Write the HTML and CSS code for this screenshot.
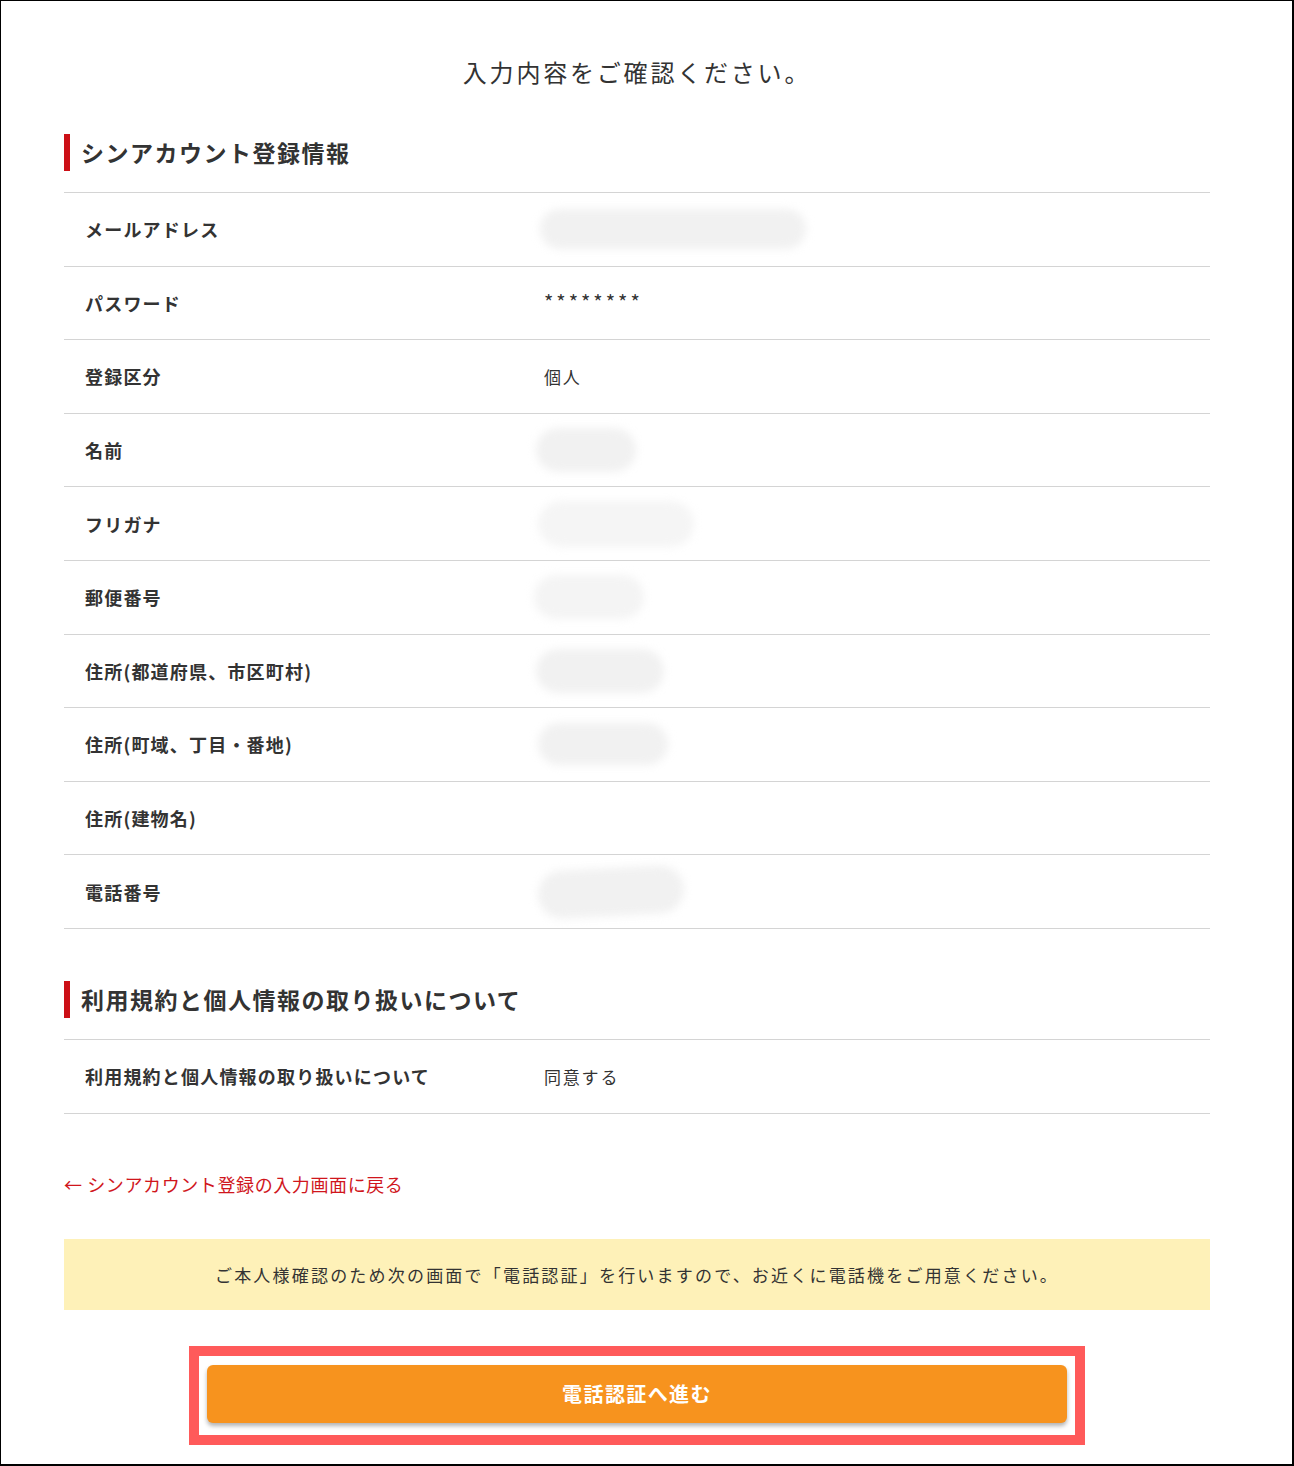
FILE: index.html
```html
<!DOCTYPE html>
<html lang="ja">
<head>
<meta charset="utf-8">
<title>入力内容の確認</title>
<link rel="stylesheet" href="styles.css">
</head>
<body>
<div class="frame">
  <main class="content">
    <h1 class="page-title">入力内容をご確認ください。</h1>

    <section class="section">
      <h2 class="section-title">シンアカウント登録情報</h2>
      <div class="table">
        <div class="row"><div class="label">メールアドレス</div><div class="value"><span class="blur blur-email"></span></div></div>
        <div class="row"><div class="label">パスワード</div><div class="value value-pass">********</div></div>
        <div class="row"><div class="label">登録区分</div><div class="value">個人</div></div>
        <div class="row"><div class="label">名前</div><div class="value"><span class="blur blur-name"></span></div></div>
        <div class="row"><div class="label">フリガナ</div><div class="value"><span class="blur blur-kana"></span></div></div>
        <div class="row"><div class="label">郵便番号</div><div class="value"><span class="blur blur-zip"></span></div></div>
        <div class="row"><div class="label">住所(都道府県、市区町村)</div><div class="value"><span class="blur blur-addr1"></span></div></div>
        <div class="row"><div class="label">住所(町域、丁目・番地)</div><div class="value"><span class="blur blur-addr2"></span></div></div>
        <div class="row"><div class="label">住所(建物名)</div><div class="value"></div></div>
        <div class="row"><div class="label">電話番号</div><div class="value"><span class="blur blur-tel"></span></div></div>
      </div>
    </section>

    <section class="section section-terms">
      <h2 class="section-title">利用規約と個人情報の取り扱いについて</h2>
      <div class="table">
        <div class="row"><div class="label">利用規約と個人情報の取り扱いについて</div><div class="value">同意する</div></div>
      </div>
    </section>

    <a class="back-link" href="#">← シンアカウント登録の入力画面に戻る</a>

    <div class="notice">ご本人様確認のため次の画面で「電話認証」を行いますので、お近くに電話機をご用意ください。</div>

    <div class="cta-wrap">
      <div class="cta-highlight">
        <button class="cta" type="button">電話認証へ進む</button>
      </div>
    </div>
  </main>
</div>
</body>
</html>
```

FILE: styles.css
```css
* { box-sizing: border-box; }

html, body {
  margin: 0;
  padding: 0;
  background: #fff;
}

body {
  font-family: "Noto Sans CJK JP", "Noto Sans", sans-serif;
  color: #333;
}

.frame {
  width: 1294px;
  height: 1466px;
  border: 2px solid #000;
  border-top-width: 1px;
  border-left-width: 1px;
  padding: 0 82px 0 63px;
  overflow: hidden;
}

.content {
  width: 1146px;
}

.page-title {
  margin: 0;
  padding-top: 53px;
  font-size: 24px;
  line-height: 36px;
  font-weight: 400;
  letter-spacing: 2.8px;
  text-align: center;
  color: #333;
}

.section-title {
  margin: 44px 0 21px;
  border-left: 6px solid #cc0f16;
  padding-left: 11px;
  font-size: 23px;
  line-height: 37px;
  font-weight: 700;
  letter-spacing: 1.5px;
  color: #333;
}

.section-terms .section-title {
  margin-top: 52px;
}

.table {
  border-top: 1px solid #d4d4d4;
}

.row {
  display: flex;
  align-items: center;
  height: 73.6px;
  border-bottom: 1px solid #d4d4d4;
}

.label {
  width: 480px;
  padding-left: 21px;
  font-size: 18px;
  font-weight: 700;
  letter-spacing: 1.2px;
  color: #333;
}

.value {
  flex: 1;
  font-size: 17px;
  letter-spacing: 1.8px;
  color: #333;
  display: flex;
  align-items: center;
}

.value-pass {
  padding-bottom: 2px;
  font-size: 20px;
  letter-spacing: 3px;
}

.blur {
  display: block;
  background: #f1f1f1;
  border-radius: 30px;
  filter: blur(4px);
}

.blur-email { width: 266px; height: 40px; margin-left: -4px; }
.blur-name { width: 100px; height: 44px; margin-left: -8px; }
.blur-kana { width: 156px; height: 46px; margin-left: -6px; background: #f5f5f5; }
.blur-zip { width: 110px; height: 44px; margin-left: -10px; background: #f4f4f4; }
.blur-addr1 { width: 128px; height: 44px; margin-left: -8px; }
.blur-addr2 { width: 130px; height: 42px; margin-left: -6px; }
.blur-tel { width: 146px; height: 48px; margin-left: -6px; transform: rotate(-3deg); }

.back-link {
  display: block;
  margin-top: 57px;
  font-size: 18px;
  line-height: 26px;
  letter-spacing: 0.6px;
  color: #d0161c;
  text-decoration: none;
}

.notice {
  margin-top: 42px;
  height: 71px;
  background: #fef1b8;
  display: flex;
  align-items: center;
  justify-content: center;
  font-size: 17px;
  letter-spacing: 2.2px;
  color: #333;
}

.cta-wrap {
  display: flex;
  justify-content: center;
  margin-top: 36px;
}

.cta-highlight {
  border: 10px solid #ff5a5a;
  padding: 9px 8px 12px;
  background: #fff;
}

.cta {
  display: block;
  width: 860px;
  height: 58px;
  border: 0;
  border-radius: 6px;
  background: #f7931e;
  color: #fff;
  font-family: "Noto Sans CJK JP", "Noto Sans", sans-serif;
  font-size: 20px;
  font-weight: 700;
  letter-spacing: 1.4px;
  box-shadow: 0 3px 4px rgba(0, 0, 0, 0.3);
  cursor: pointer;
}
```
